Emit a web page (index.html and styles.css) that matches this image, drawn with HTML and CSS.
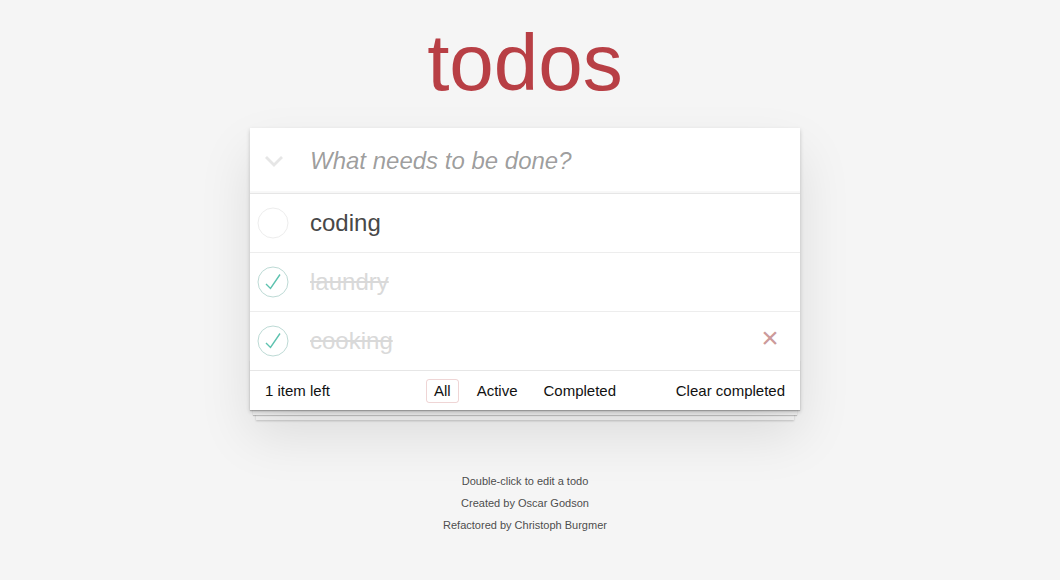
FILE: index.html
```html
<!DOCTYPE html>
<html lang="en">
<head>
<meta charset="utf-8">
<title>todos</title>
<link rel="stylesheet" href="styles.css">
</head>
<body>
<div class="page">
  <h1 class="title">todos</h1>
  <section class="todoapp">
    <div class="header">
      <span class="toggle-all">
        <svg width="20" height="12" viewBox="0 0 20 12"><polyline points="2,2 10,10 18,2" fill="none" stroke="#e6e6e6" stroke-width="2.8"/></svg>
      </span>
      <input class="new-todo" type="text" placeholder="What needs to be done?">
    </div>
    <ul class="todo-list">
      <li class="todo">
        <span class="toggle">
          <svg width="32" height="32" viewBox="0 0 32 32"><circle cx="16" cy="16" r="15" fill="none" stroke="#ededed" stroke-width="1"/></svg>
        </span>
        <label class="todo-label">coding</label>
      </li>
      <li class="todo completed">
        <span class="toggle">
          <svg width="32" height="32" viewBox="0 0 32 32"><circle cx="16" cy="16" r="15" fill="none" stroke="#bddad5" stroke-width="1"/><polyline points="23,8.5 13.5,22.5 9,18" fill="none" stroke="#5dc2af" stroke-width="1.4"/></svg>
        </span>
        <label class="todo-label">laundry</label>
      </li>
      <li class="todo completed">
        <span class="toggle">
          <svg width="32" height="32" viewBox="0 0 32 32"><circle cx="16" cy="16" r="15" fill="none" stroke="#bddad5" stroke-width="1"/><polyline points="23,8.5 13.5,22.5 9,18" fill="none" stroke="#5dc2af" stroke-width="1.4"/></svg>
        </span>
        <label class="todo-label">cooking</label>
        <button class="destroy" type="button">×</button>
      </li>
    </ul>
    <footer class="footer">
      <span class="todo-count"><strong class="count">1</strong> item left</span>
      <ul class="filters">
        <li><a class="filter selected" href="#/">All</a></li>
        <li><a class="filter" href="#/active">Active</a></li>
        <li><a class="filter" href="#/completed">Completed</a></li>
      </ul>
      <button class="clear-completed" type="button">Clear completed</button>
    </footer>
  </section>
  <footer class="info">
    <p>Double-click to edit a todo</p>
    <p>Created by Oscar Godson</p>
    <p>Refactored by Christoph Burgmer</p>
  </footer>
</div>
</body>
</html>
```
FILE: styles.css
```css
html, body {
  margin: 0;
  padding: 0;
}

body {
  background: #f5f5f5;
  color: #111;
  font-family: "Liberation Sans", Arial, Helvetica, sans-serif;
  font-size: 14px;
  line-height: 1.4em;
  padding-right: 10px;
}

.page {
  width: 550px;
  margin: 0 auto;
  padding-top: 23px;
}

.title {
  margin: 0;
  font-size: 80px;
  line-height: 80px;
  font-weight: 400;
  color: #b83f45;
  text-align: center;
}

.todoapp {
  margin-top: 25px;
  background: #fff;
  position: relative;
  box-shadow: 0 2px 4px 0 rgba(0, 0, 0, 0.2), 0 25px 50px 0 rgba(0, 0, 0, 0.1);
}

.header {
  display: flex;
  align-items: center;
  height: 65px;
  box-shadow: inset 0 -2px 1px rgba(0, 0, 0, 0.03);
}

.toggle-all {
  width: 60px;
  flex: none;
  display: flex;
  align-items: center;
  padding-left: 14px;
  box-sizing: border-box;
}

.toggle-all svg {
  display: block;
}

.new-todo {
  flex: 1;
  min-width: 0;
  height: 65px;
  box-sizing: border-box;
  border: none;
  outline: none;
  background: transparent;
  padding: 16px 16px 16px 0;
  font-family: inherit;
  font-size: 24px;
  line-height: 1.4em;
  color: #484848;
}

.new-todo::placeholder {
  font-style: italic;
  font-weight: 400;
  color: rgba(0, 0, 0, 0.4);
}

.todo-list {
  margin: 0;
  padding: 0;
  list-style: none;
  border-top: 1px solid #e6e6e6;
}

.todo {
  display: flex;
  align-items: center;
  border-bottom: 1px solid #ededed;
}

.todo:last-child {
  border-bottom: none;
}

.toggle {
  width: 60px;
  flex: none;
  display: flex;
  align-items: center;
  padding-left: 7px;
  box-sizing: border-box;
}

.toggle svg {
  display: block;
}

.todo-label {
  flex: 1;
  font-size: 24px;
  line-height: 28px;
  padding: 15px 0;
  color: #484848;
}

.completed .todo-label {
  color: #d9d9d9;
  text-decoration: line-through;
}

.destroy {
  flex: none;
  width: 40px;
  height: 40px;
  margin: 0 10px 6px 0;
  padding: 0;
  border: none;
  background: none;
  font-family: inherit;
  font-size: 30px;
  line-height: 40px;
  color: #cc9a9a;
  text-align: center;
}

.footer {
  position: relative;
  display: grid;
  grid-template-columns: 1fr auto 1fr;
  align-items: center;
  height: 40px;
  box-sizing: border-box;
  padding: 10px 15px;
  border-top: 1px solid #e6e6e6;
  font-size: 15px;
  line-height: 20px;
  color: #111;
  background: #fff;
}

.footer::before {
  content: "";
  position: absolute;
  right: 0;
  bottom: 0;
  left: 0;
  height: 50px;
  overflow: hidden;
  z-index: -1;
  box-shadow: 0 1px 1px rgba(0, 0, 0, 0.2),
    0 8px 0 -3px #f6f6f6,
    0 9px 1px -3px rgba(0, 0, 0, 0.2),
    0 16px 0 -6px #f6f6f6,
    0 17px 2px -6px rgba(0, 0, 0, 0.2);
}

.todo-count {
  justify-self: start;
  position: relative;
  z-index: 1;
}

.count {
  font-weight: 400;
}

.filters {
  display: flex;
  align-items: center;
  gap: 4px;
  height: 20px;
  margin: 0;
  padding: 0;
  list-style: none;
  position: relative;
  z-index: 1;
}

.filter {
  display: inline-block;
  margin: 3px;
  padding: 3px 7px;
  line-height: 16px;
  border: 1px solid transparent;
  border-radius: 3px;
  color: inherit;
  text-decoration: none;
}

.filter.selected {
  border-color: rgba(175, 47, 47, 0.2);
}

.clear-completed {
  justify-self: end;
  margin: 0;
  padding: 0;
  border: none;
  background: none;
  font-family: inherit;
  font-size: 15px;
  line-height: 20px;
  color: inherit;
  position: relative;
  z-index: 1;
}

.info {
  margin-top: 66px;
  display: flex;
  flex-direction: column;
  gap: 11px;
  color: #4d4d4d;
  font-size: 11px;
  text-shadow: 0 1px 0 rgba(255, 255, 255, 0.5);
  text-align: center;
}

.info p {
  margin: 0;
  line-height: 1;
}
```
